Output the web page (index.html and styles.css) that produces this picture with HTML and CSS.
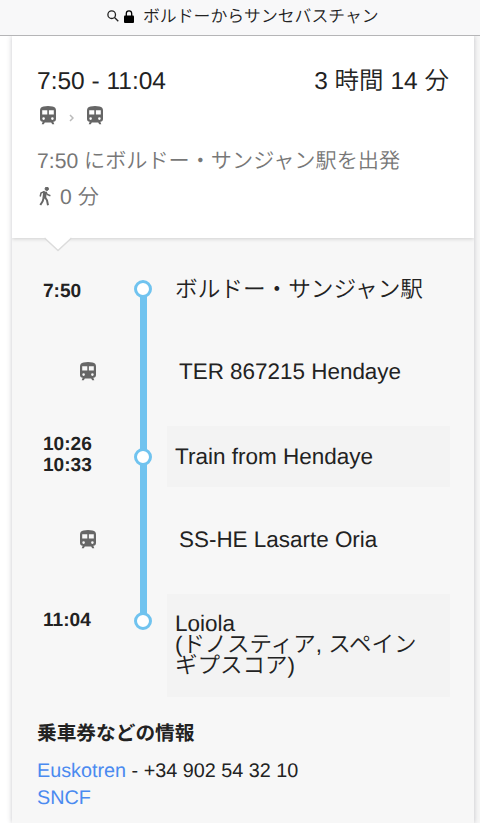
FILE: index.html
```
<!DOCTYPE html>
<html lang="ja">
<head>
  <meta charset="UTF-8">
  <meta name="viewport" content="width=device-width, initial-scale=1.0">
  <title>ボルドーからサンセバスチャン</title>
  <link rel="stylesheet" href="styles.css">
</head>
<body>

  <!-- Shared icons -->
  <svg class="sprite" width="0" height="0">
    <symbol id="train" viewBox="0 0 16 19">
      <path fill-rule="evenodd" d="M3.500 .6Q8-.4 12.500 .6Q16 1.200 16 4.500V13Q16 15.500 13.300 15.700L14.300 18.300H12.200L11.200 16.500H4.800L3.800 18.300H1.700L2.700 15.700Q0 15.500 0 13V4.500Q0 1.200 3.500 .6ZM2.200 4.300V8.500H7.300V4.300ZM8.900 4.300V8.500H13.800V4.300ZM3.600 11.300A1.300 1.300 0 1 0 3.600 13.900A1.300 1.300 0 1 0 3.600 11.300ZM12.400 11.300A1.300 1.300 0 1 0 12.400 13.900A1.300 1.300 0 1 0 12.400 11.300Z"/>
    </symbol>
  </svg>

  <!-- Address bar -->
  <header class="bar">
    <svg class="search" viewBox="0 0 12 12"><circle cx="4.700" cy="4.700" r="3.800"/><path d="M7.500 7.500L11.300 11.300"/></svg>
    <svg class="lock" viewBox="0 0 10 13"><path d="M2.300 6V3.600a2.700 2.700 0 0 1 5.400 0V6" fill="none" stroke="#000" stroke-width="1.300"/><rect y="5.500" width="10" height="7.500" rx="1"/></svg>
    <span>ボルドーからサンセバスチャン</span>
  </header>

  <main class="card">
    <section class="summary">
      <div class="trip">
        <span>7:50 - 11:04</span>
        <span>3 時間 14 分</span>
      </div>
      <div class="modes">
        <svg class="train"><use href="#train"/></svg>
        <svg class="chevron" viewBox="0 0 5 8"><path d="M1 1L4 4L1 7"/></svg>
        <svg class="train"><use href="#train"/></svg>
      </div>
      <p class="depart">7:50 にボルドー・サンジャン駅を出発</p>
      <p class="walk">
        <svg viewBox="0 0 12 19"><circle cx="7.800" cy="1.800" r="1.700" fill="#666"/><path d="M6 4.600L5.300 11" stroke-width="3.600"/><path d="M5.600 4.400L2 6.100L1.200 9.500M7 5L8.300 7.500L11.400 8.700" stroke-width="1.500"/><path d="M4.700 10.500L3.700 14.200L1.300 18M6 10.300L8 13.300L9 18.200" stroke-width="2"/></svg>
        <span>0 分</span>
      </p>
      <svg class="notch" viewBox="0 0 28 15"><path d="M0 0L14 13L28 0" fill="#fff"/><path d="M.5 1L14 13.500L27.500 1" fill="none" stroke="#dcdcdc" stroke-width="1.500"/></svg>
    </section>

    <!-- Stops and legs -->
    <section class="timeline">
      <div class="stop first">
        <div class="time">7:50</div>
        <div class="track"><i class="dot"></i></div>
        <div class="place">ボルドー・サンジャン駅</div>
      </div>
      <div class="leg">
        <svg class="train"><use href="#train"/></svg>
        <div class="track"></div>
        <div class="line">TER 867215 Hendaye</div>
      </div>
      <div class="stop middle">
        <div class="time">10:26<br>10:33</div>
        <div class="track"><i class="dot"></i></div>
        <div class="place shaded">Train from Hendaye</div>
      </div>
      <div class="leg second">
        <svg class="train"><use href="#train"/></svg>
        <div class="track"></div>
        <div class="line">SS-HE Lasarte Oria</div>
      </div>
      <div class="stop last">
        <div class="time">11:04</div>
        <div class="track"><i class="dot"></i></div>
        <div class="place shaded">Loiola<br>(ドノスティア, スペイン<br>ギプスコア)</div>
      </div>
    </section>

    <section class="info">
      <h2>乗車券などの情報</h2>
      <p><a href="#">Euskotren</a> - +34 902 54 32 10</p>
      <p><a href="#">SNCF</a></p>
    </section>
  </main>

</body>
</html>
```
FILE: styles.css
```
* {
  box-sizing: border-box;
}

body {
  margin: 0;
  height: 823px;
  overflow: hidden;
  display: flex;
  flex-direction: column;
  background: linear-gradient(90deg, #fff 240px, #f7f7f7 240px);
  color: #222;
  font-family: "Liberation Sans", "Noto Sans CJK JP", sans-serif;
  font-weight: 350;
  text-rendering: geometricPrecision;
}

p, h2 {
  margin: 0;
}

a {
  color: #4a8af0;
  text-decoration: none;
}

.sprite {
  position: absolute;
}

/* Address bar */
.bar {
  position: relative;
  z-index: 1;
  flex: none;
  display: flex;
  align-items: center;
  height: 36px;
  padding: 0 0 3px 107px;
  background: #f8f8f9;
  border-bottom: 1px solid #b5b5b7;
  font-size: 16.85px;
  white-space: nowrap;
}

.bar span {
  margin-top: -3px;
}

.search {
  width: 12px;
  height: 12px;
  margin-right: 5px;
  fill: none;
  stroke: #222;
  stroke-width: 1.3;
}

.lock {
  width: 10px;
  height: 13px;
  margin-right: 9px;
}

/* Result card */
.card {
  flex: 1;
  width: 462px;
  margin-left: 12px;
  background: #f7f7f7;
  box-shadow: 0 0 5px rgba(50, 50, 70, .28);
}

.summary {
  position: relative;
  height: 202px;
  padding: 30px 25px 0;
  background: #fff;
  box-shadow: 0 1px 4px rgba(0, 0, 0, .16);
  clip-path: inset(0 0 -20px 0);
}

.trip {
  display: flex;
  justify-content: space-between;
  font-size: 24.5px;
  line-height: 32px;
}

.modes {
  display: flex;
  align-items: center;
  height: 19px;
  margin: 8px 0 0 3px;
}

.train {
  width: 16px;
  height: 19px;
  fill: #666;
}

.chevron {
  width: 5px;
  height: 8px;
  margin: 4px 13px 0;
  fill: none;
  stroke: #bbb;
  stroke-width: 1.5;
}

.depart,
.walk {
  color: #777;
  font-size: 21.15px;
  line-height: 36px;
}

.depart {
  margin-top: 19px;
  white-space: nowrap;
}

.walk {
  display: flex;
  align-items: center;
  gap: 9px;
  padding-left: 2px;
}

.walk svg {
  width: 12px;
  height: 19px;
  margin-top: -3px;
  fill: none;
  stroke: #666;
}

.notch {
  position: absolute;
  top: 201px;
  left: 32px;
  width: 28px;
  height: 15px;
}

/* Timeline */
.timeline {
  padding: 21px 24px 0 31px;
}

.stop,
.leg {
  display: grid;
  grid-template-columns: 90px 20px 1fr;
}

.stop {
  height: 61px;
}

.stop.first {
  height: 59px;
}

.stop.last {
  height: 103px;
}

.leg {
  height: 108px;
}

.leg.second {
  height: 107px;
}

.time {
  align-self: center;
  padding-top: 5px;
  font-size: 19.1px;
  font-weight: bold;
  line-height: 21px;
}

.middle .time {
  padding: 0 0 4px;
}

.last .time {
  align-self: start;
  padding-top: 16px;
}

/* Blue line running behind the stop dots */
.track {
  display: flex;
  align-items: center;
  justify-content: center;
  background: linear-gradient(#70c3ef, #70c3ef) 7px 0 / 7px 100% no-repeat;
}

.first .track {
  background-position: 7px 29px;
}

.last .track {
  align-items: flex-start;
  padding-top: 18px;
  background-size: 7px 27px;
}

.dot {
  width: 18px;
  height: 18px;
  border: 3px solid #70c3ef;
  border-radius: 50%;
  background: #fff;
}

.place {
  display: flex;
  align-items: center;
  margin-left: 14px;
  padding-left: 8px;
  font-size: 22.5px;
  line-height: 21px;
  white-space: nowrap;
}

.first .place {
  padding-top: 2px;
  font-size: 22.65px;
}

.shaded {
  background: #f3f3f3;
}

.last .place {
  display: block;
  padding-top: 19px;
}

.leg .train {
  align-self: center;
  margin: -1px 0 0 37px;
}

.line {
  align-self: center;
  padding-left: 26px;
  font-size: 22.45px;
}

.second .train,
.second .line {
  margin-top: -2px;
}

/* Ticket information */
.info {
  padding: 23px 25px 0;
  font-size: 19.8px;
  line-height: 27px;
}

.info h2 {
  margin-bottom: 10px;
  font-size: 19.7px;
  line-height: 28px;
}
```
